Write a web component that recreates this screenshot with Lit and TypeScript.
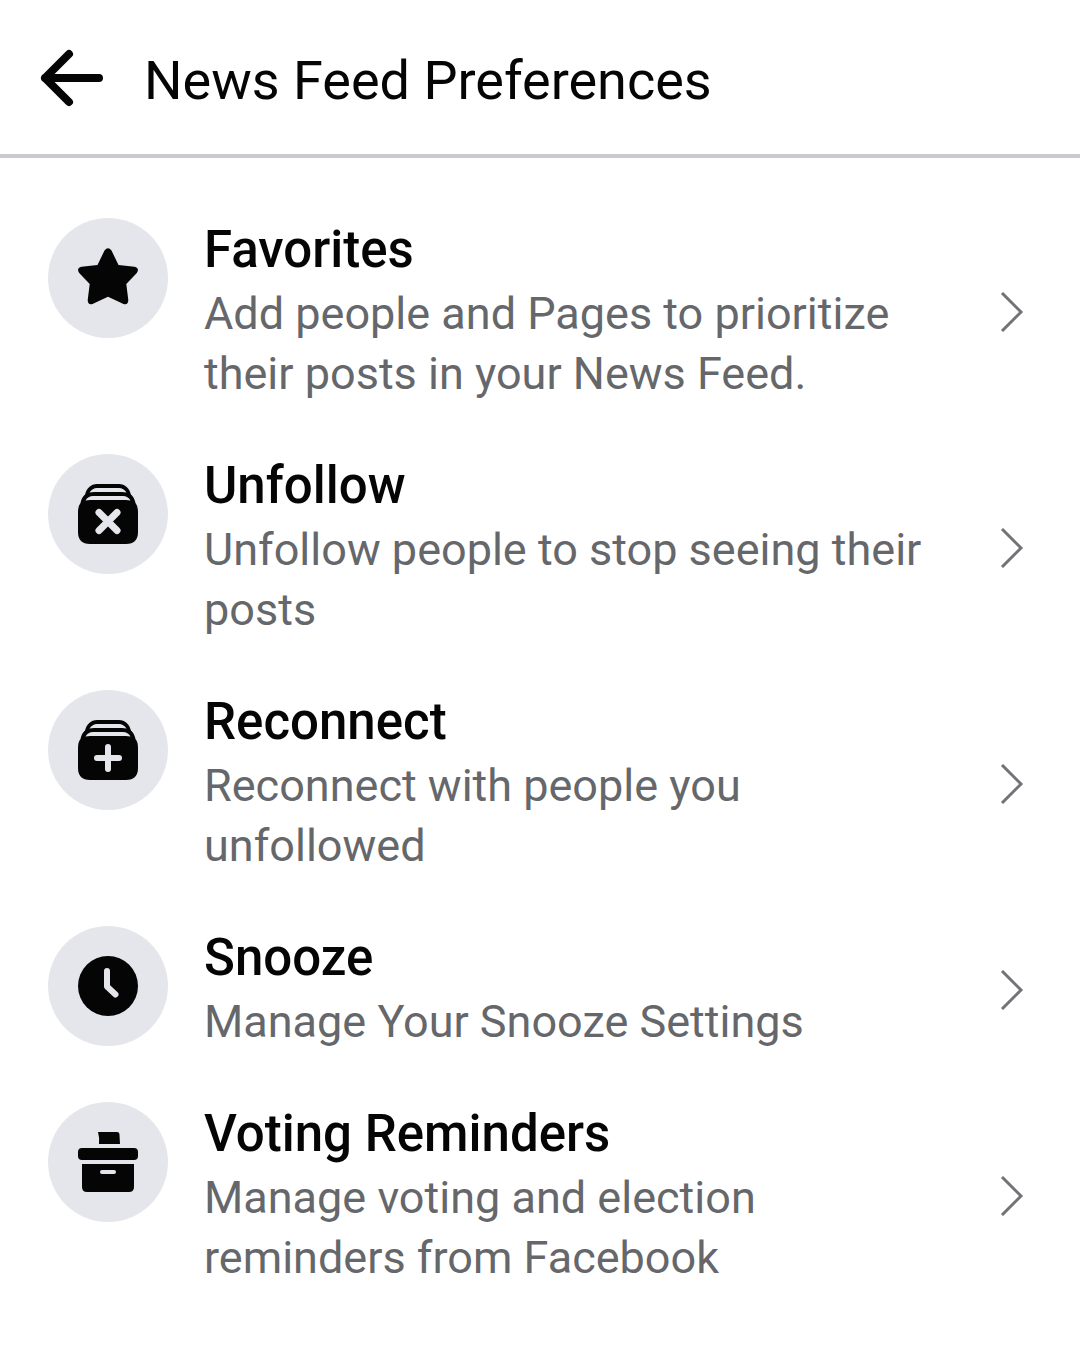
import { LitElement, html, css, svg, SVGTemplateResult } from "lit";
import { customElement } from "lit/decorators.js";

interface Preference {
  title: string;
  description: string;
  icon: SVGTemplateResult;
}

const folder = svg`
  <path d="M4 26V18Q4 14 7 11C8.500 4 13 0 19 0H41C47 0 51.500 4 53 11Q56 14 56 18V26Z" />
  <path d="M0 28Q0 22 2.500 19C4 12 8 8 14 8H46C52 8 56 12 57.500 19Q60 22 60 28V48Q60 60 48 60H12Q0 60 0 48Z" />
  <path class="cut" d="M11.500 8.500Q14.500 4 19 4H41Q45.500 4 48.500 8.500Q46 8 44 8H16Q14 8 11.500 8.500Z" />
  <path class="cut" d="M7.500 16.500Q10 12 15 12H45Q50 12 52.500 16.500Q50 16 48 16H12Q10 16 7.500 16.500Z" />
`;

const preferences: Preference[] = [
  {
    title: "Favorites",
    description: "Add people and Pages to prioritize their posts in your News Feed.",
    icon: svg`<path d="M26.5 2.5Q30 -2.2 33.5 2.5L40.5 17L56.5 18.8Q62 20.5 58.8 25L48.3 36L50.3 52Q50 57.5 45.5 56L30 48.7L14.5 56Q10 57.5 9.700 52L11.700 36L1.200 25Q-2 20.5 3.500 18.8L19.5 17Z" />`,
  },
  {
    title: "Unfollow",
    description: "Unfollow people to stop seeing their posts",
    icon: svg`${folder}<path class="line cross" d="M21 28.500L39 46.500M39 28.500L21 46.500" />`,
  },
  {
    title: "Reconnect",
    description: "Reconnect with people you unfollowed",
    icon: svg`${folder}<path class="line" d="M30 27V49M19 38H41" />`,
  },
  {
    title: "Snooze",
    description: "Manage Your Snooze Settings",
    icon: svg`<circle cx="30" cy="30" r="30" /><path class="line" d="M29 15V30.5L37.5 38.5" />`,
  },
  {
    title: "Voting Reminders",
    description: "Manage voting and election reminders from Facebook",
    icon: svg`
      <path d="M20 0H39Q41.500 0 41.500 3L42 12H21Q21.500 5 20 0Z" />
      <rect y="16" width="60" height="12" rx="4" />
      <path d="M4 32H56V55Q56 60 51 60H9Q4 60 4 55Z" />
      <rect class="cut" x="22" y="38" width="16" height="4" rx="2" />`,
  },
];

@customElement("app-root")
export class AppRoot extends LitElement {
  static styles = css`
    :host {
      display: block;
      min-height: 100vh;
      background: #fff;
      color: #050505;
      font-family: Roboto, "Liberation Sans", sans-serif;
    }
    .header {
      display: flex;
      align-items: flex-start;
      gap: 40px;
      padding: 46px 40px 38px;
      border-bottom: 4px solid #c9cacd;
    }
    .back {
      flex: none;
      display: block;
      padding: 0;
      border: 0;
      background: none;
      color: inherit;
      cursor: pointer;
    }
    .back svg,
    .icon svg {
      display: block;
    }
    .heading {
      margin: 0;
      font-size: 54px;
      line-height: 70px;
      font-weight: 400;
    }
    .list {
      display: flex;
      flex-direction: column;
      gap: 48px;
      margin: 0;
      padding: 60px 56px 60px 48px;
      list-style: none;
    }
    .row {
      display: flex;
      align-items: center;
      color: inherit;
      text-decoration: none;
    }
    .icon {
      flex: none;
      align-self: flex-start;
      display: grid;
      place-items: center;
      width: 120px;
      height: 120px;
      margin-right: 36px;
      border-radius: 50%;
      background: #e4e6eb;
      fill: #050505;
    }
    .cut {
      fill: #e4e6eb;
    }
    .line {
      fill: none;
      stroke: #e4e6eb;
      stroke-width: 6;
      stroke-linecap: round;
      stroke-linejoin: round;
    }
    .cross {
      stroke-width: 7;
    }
    .text {
      flex: 1;
      min-width: 0;
      display: flex;
      flex-direction: column;
      gap: 4px;
      padding: 2px 0;
    }
    .title {
      margin: 0;
      font-size: 51px;
      line-height: 60px;
      font-weight: 500;
    }
    .description {
      margin: 0;
      font-size: 45px;
      line-height: 60px;
      color: #65676b;
    }
    .chevron {
      flex: none;
      margin-left: 48px;
      fill: none;
      stroke: #727377;
      stroke-width: 3;
    }
  `;

  render() {
    return html`
      <header class="header">
        <button class="back" type="button" aria-label="Back">
          <svg width="64" height="64" viewBox="0 0 64 64" fill="none" stroke="currentColor" stroke-width="8" stroke-linecap="round" stroke-linejoin="round" aria-hidden="true">
            <path d="M29 8L5 32L29 56M5 32H59" />
          </svg>
        </button>
        <h1 class="heading">News Feed Preferences</h1>
      </header>
      <main>
        <ul class="list">
          ${preferences.map(
            (item) => html`
              <li>
                <a class="row" href="#">
                  <span class="icon">
                    <svg width="60" height="60" viewBox="0 0 60 60" aria-hidden="true">${item.icon}</svg>
                  </span>
                  <div class="text">
                    <h2 class="title">${item.title}</h2>
                    <p class="description">${item.description}</p>
                  </div>
                  <svg class="chevron" width="24" height="40" viewBox="0 0 24 40" aria-hidden="true">
                    <path d="M2 1L21 20L2 39" />
                  </svg>
                </a>
              </li>
            `
          )}
        </ul>
      </main>
    `;
  }
}
